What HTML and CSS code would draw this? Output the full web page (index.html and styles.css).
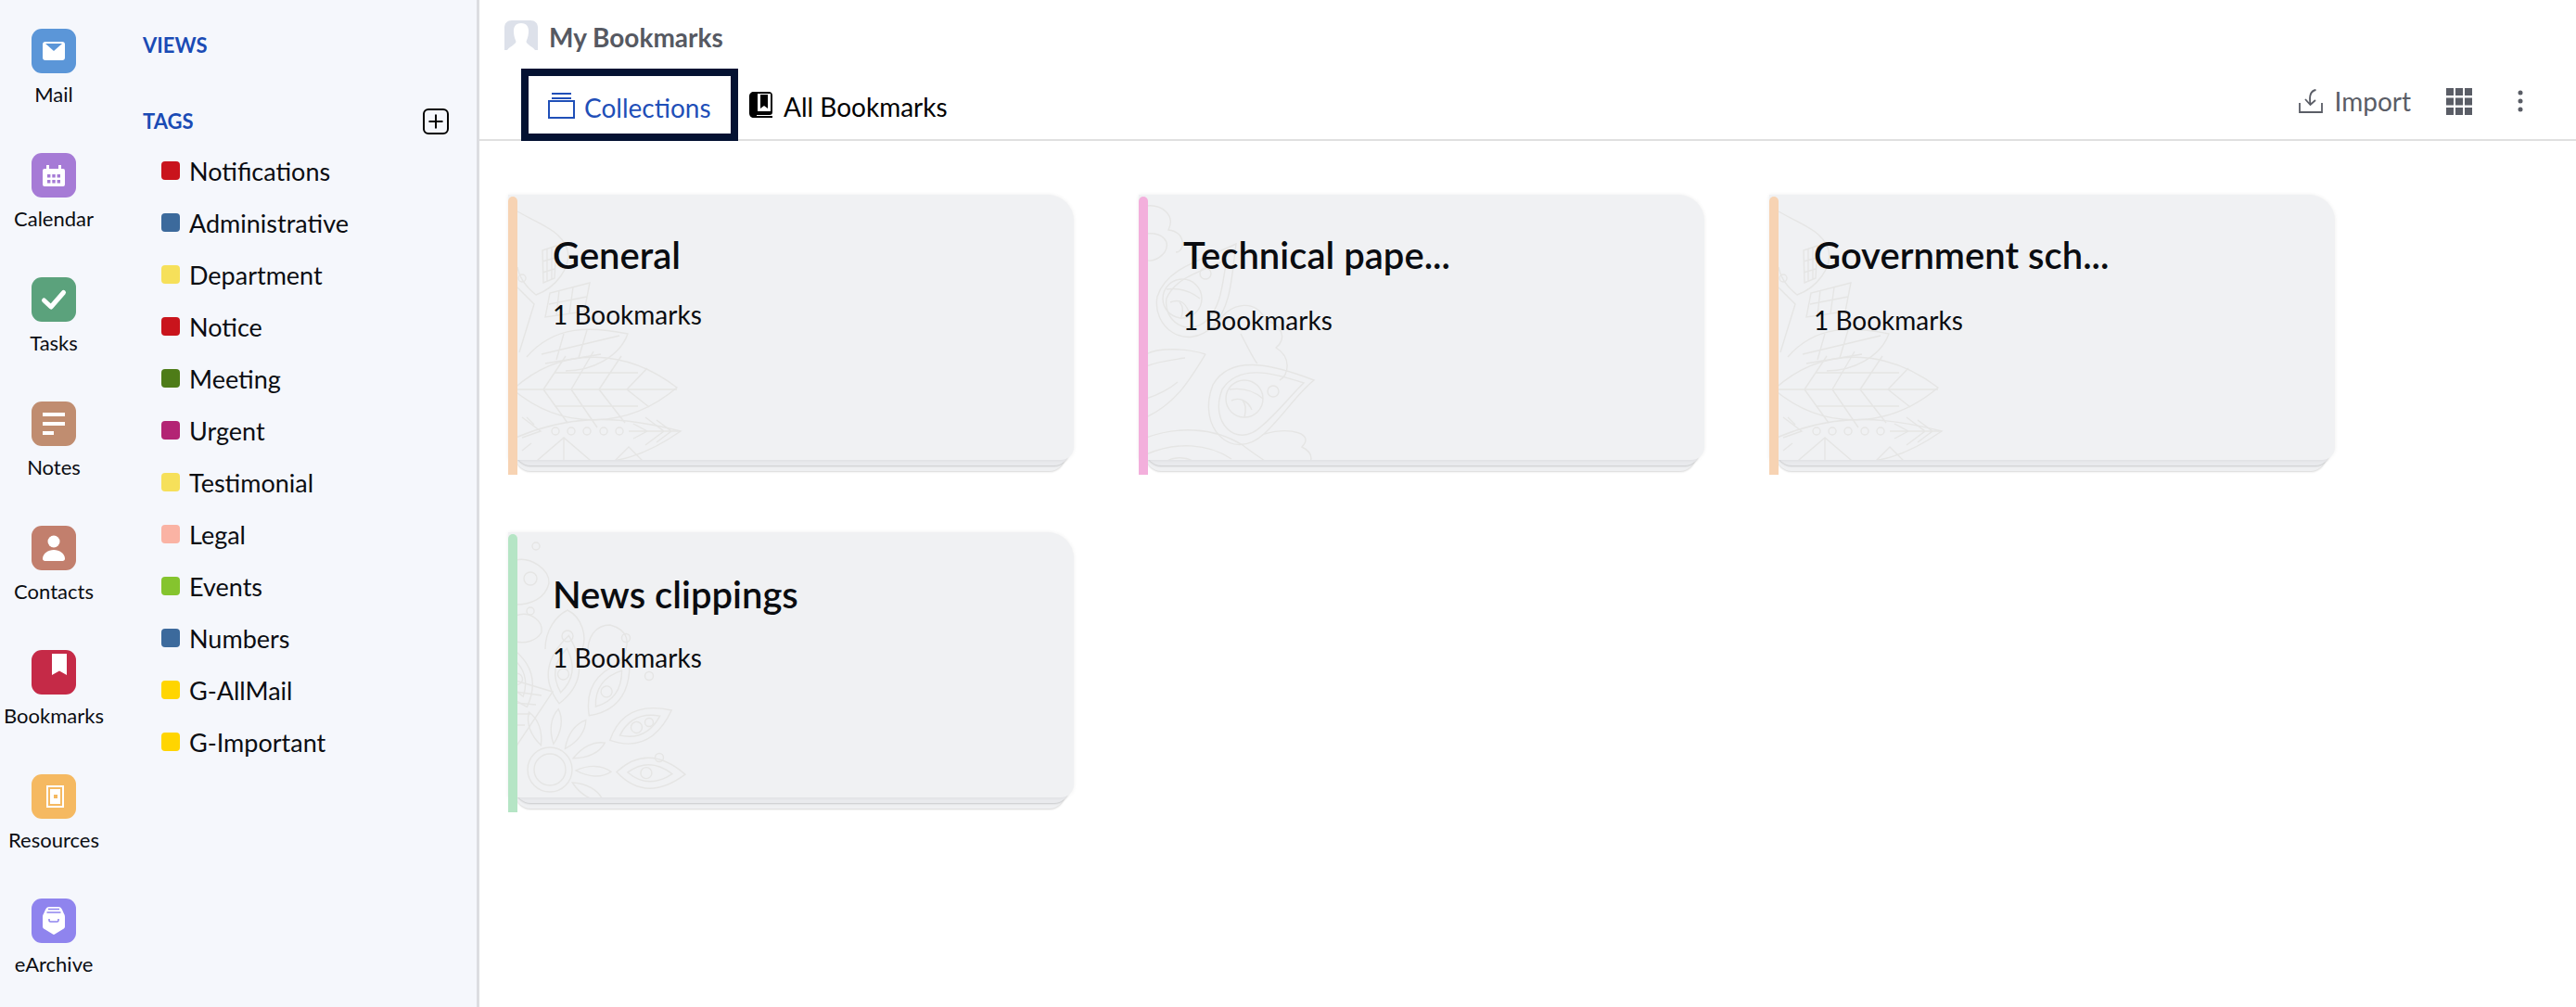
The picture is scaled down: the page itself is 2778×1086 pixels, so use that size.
FILE: index.html
```html
<!DOCTYPE html>
<html lang="en">
<head>
<meta charset="utf-8">
<title>My Bookmarks</title>
<link rel="stylesheet" href="styles.css">
</head>
<body>
<svg class="defs" width="0" height="0" aria-hidden="true">
  <defs>
    <symbol id="leaf" viewBox="0 0 200 286">
      <g fill="none">
        <path d="M5 210C60 160 130 168 182 208C130 252 60 256 5 210Z"/>
        <path d="M5 210H182M38 210L62 174M68 210L92 169M98 210L122 174M128 210L150 187M38 210L64 246M68 210L96 251M98 210L126 246M128 210L152 229M50 192H140M50 228H140"/>
        <path d="M8 262C60 240 110 235 186 255C150 280 120 292 60 290"/>
        <path d="M130 255H186M135 247L150 255L135 263M148 240L168 255L148 270M160 243L176 255L160 267"/>
        <circle cx="51" cy="255" r="4"/><circle cx="68" cy="255" r="4"/><circle cx="85" cy="255" r="4"/><circle cx="103" cy="255" r="4"/><circle cx="120" cy="255" r="4"/>
        <path d="M15 262L35 255L15 240M28 248L20 240M25 268L15 276"/>
        <path d="M25 292L60 262L95 292M60 262V292M110 292L130 272L150 292"/>
        <path d="M10 18C30 30 58 38 64 60C68 78 52 100 30 108C20 100 12 90 10 78"/>
        <path d="M37 60L52 55L50 90L38 95ZM42 58V93M47 57V91M37 72L51 68M37 84L50 80"/>
        <path d="M10 100L28 118L12 170M40 132L45 106L88 95L82 126ZM55 103L52 130M70 100L66 128M44 118L85 110"/>
        <circle cx="15" cy="90" r="4"/><circle cx="5" cy="108" r="4"/>
        <path d="M20 175C50 140 90 142 129 150C120 175 90 190 62 190M36 172L120 152M40 182L100 172M60 150L52 178M85 146L76 176"/>
      </g>
    </symbol>
    <symbol id="peacock" viewBox="0 0 200 286">
      <g fill="none">
        <path d="M189 200C150 185 100 170 80 205C62 250 100 290 135 258C155 240 170 215 189 200Z"/>
        <path d="M178 203C145 192 108 182 90 210C76 245 105 275 132 250C150 235 165 215 178 203Z"/>
        <circle cx="114" cy="220" r="20"/>
        <path d="M98 210C112 208 125 212 134 220M100 222C108 218 118 222 122 232M112 222C116 226 116 232 114 240"/>
        <circle cx="145" cy="212" r="6"/>
        <path d="M105 53C70 70 30 78 20 110C14 142 50 170 80 142C100 120 100 90 105 53Z"/>
        <path d="M95 70C70 82 40 88 30 112C26 135 52 155 74 135C90 118 90 95 95 70Z"/>
        <circle cx="47" cy="112" r="21"/>
        <path d="M30 102C44 100 56 104 66 112M34 116C44 112 50 116 54 126M44 116C48 120 48 126 46 132"/>
        <circle cx="72" cy="85" r="6"/>
        <path d="M72 172C50 165 20 165 8 172M72 172C55 200 40 225 8 240M50 176C35 178 20 180 8 185M42 202C30 212 20 216 8 220"/>
        <path d="M8 12C25 10 40 22 32 38C52 40 50 62 40 62M8 42C25 40 35 50 28 62C20 72 10 72 8 70"/>
        <path d="M80 145C100 110 130 115 136 135C155 140 160 155 148 165C165 175 162 195 152 200"/>
        <path d="M110 150C118 165 125 180 128 182"/>
        <path d="M8 262C40 250 80 250 112 270C125 280 135 286 140 290M8 280C40 266 75 268 100 285M25 292C35 280 55 282 65 292"/>
        <path d="M135 258C165 250 190 258 176 272C192 280 185 292 180 292"/>
      </g>
    </symbol>
    <g id="petal" fill="none">
      <path d="M0 -72C-20 -92 -24 -116 0 -146C24 -116 20 -92 0 -72Z"/>
      <path d="M0 -84C-11 -98 -13 -114 0 -132C13 -114 11 -98 0 -84Z"/>
      <circle cx="0" cy="-104" r="6"/>
      <path d="M0 -28C-7 -42 -7 -56 0 -66C7 -56 7 -42 0 -28Z"/>
    </g>
    <symbol id="flower" viewBox="0 0 200 286">
      <g fill="none">
        <circle cx="45" cy="256" r="17"/><circle cx="45" cy="256" r="24"/>
        <g transform="translate(45 256)">
          <use href="#petal" transform="rotate(8)"/>
          <use href="#petal" transform="rotate(36)"/>
          <use href="#petal" transform="rotate(64)"/>
          <use href="#petal" transform="rotate(92)"/>
          <use href="#petal" transform="rotate(120)"/>
          <use href="#petal" transform="rotate(-20)"/>
        </g>
        <path d="M8 160L48 172L8 232ZM8 172L36 176M8 184L30 186M8 196L24 196M8 208L18 208"/>
        <circle cx="30" cy="15" r="4"/><circle cx="127" cy="114" r="4.5"/><circle cx="152" cy="155" r="4.5"/><circle cx="152" cy="205" r="4.5"/><circle cx="163" cy="243" r="4.5"/>
        <path d="M8 30C24 26 45 40 44 55C40 72 24 78 8 78"/><circle cx="24" cy="50" r="7"/>
        <path d="M8 90C24 84 38 96 36 108C30 118 18 120 8 118"/><circle cx="24" cy="85" r="4"/>
        <circle cx="64" cy="112" r="6"/><path d="M40 126C40 105 52 90 64 84C80 92 85 112 80 126"/>
        <path d="M86 135C84 112 95 100 110 100C128 105 135 118 120 140"/>
      </g>
    </symbol>
  </defs>
</svg>

<div class="app">
  <aside class="side">
    <nav class="rail">
      <a class="app-item">
        <svg class="app-icon" viewBox="0 0 48 48"><rect class="ic-mail" width="48" height="48" rx="11"/><rect x="12" y="14" width="24" height="20" rx="3" fill="#fff"/><path d="M15 16H33L24 24Z" fill="#5b96d8"/></svg>
        <span class="app-label">Mail</span>
      </a>
      <a class="app-item">
        <svg class="app-icon" viewBox="0 0 48 48"><rect class="ic-cal" width="48" height="48" rx="11"/><path d="M16 13h3v4h10v-4h3v4h2a2 2 0 0 1 2 2v15a2 2 0 0 1-2 2H14a2 2 0 0 1-2-2V19a2 2 0 0 1 2-2h2Z" fill="#fff"/><path d="M17 23h3.4v3.4H17zM22.3 23h3.4v3.4h-3.4zM27.6 23H31v3.4h-3.4zM17 29h3.4v3.4H17zM22.3 29h3.4v3.4h-3.4zM27.6 29H31v3.4h-3.4z" fill="#a67bd6"/></svg>
        <span class="app-label">Calendar</span>
      </a>
      <a class="app-item">
        <svg class="app-icon" viewBox="0 0 48 48"><rect class="ic-task" width="48" height="48" rx="11"/><path d="M13.5 25L21 32L34.5 16.5" fill="none" stroke="#fff" stroke-width="5" stroke-linecap="round" stroke-linejoin="round"/></svg>
        <span class="app-label">Tasks</span>
      </a>
      <a class="app-item">
        <svg class="app-icon" viewBox="0 0 48 48"><rect class="ic-note" width="48" height="48" rx="11"/><path d="M12 12h24v4H12zM12 22h24v4H12zM12 32h12v4H12z" fill="#fff"/></svg>
        <span class="app-label">Notes</span>
      </a>
      <a class="app-item">
        <svg class="app-icon" viewBox="0 0 48 48"><rect class="ic-cont" width="48" height="48" rx="11"/><circle cx="24" cy="17" r="6.5" fill="#fff"/><path d="M12 35.500C12 30 18 26 24 26S36 30 36 35.500C36 37 35 38 33.500 38H14.500C13 38 12 37 12 35.500Z" fill="#fff"/></svg>
        <span class="app-label">Contacts</span>
      </a>
      <a class="app-item">
        <svg class="app-icon" viewBox="0 0 48 48"><rect class="ic-book" width="48" height="48" rx="11"/><path d="M22 4H38V27L30 22.500L22 27Z" fill="#fff"/></svg>
        <span class="app-label">Bookmarks</span>
      </a>
      <a class="app-item">
        <svg class="app-icon" viewBox="0 0 48 48"><rect class="ic-res" width="48" height="48" rx="11"/><rect x="17" y="13" width="17" height="22" fill="none" stroke="#fff" stroke-width="2"/><rect x="20" y="16" width="11" height="16" fill="#fff"/><rect x="24" y="22" width="4" height="4" fill="#f5b961"/></svg>
        <span class="app-label">Resources</span>
      </a>
      <a class="app-item">
        <svg class="app-icon" viewBox="0 0 48 48"><rect class="ic-arc" width="48" height="48" rx="11"/><path d="M19 9H29C31 9 32 10 33 12L35 16.500C35.700 17.500 36 18.500 36 20V30C36 31.500 35.400 32.300 34 33L25 38.500C24.300 39 23.700 39 23 38.500L14 33C12.600 32.300 12 31.500 12 30V20C12 18.500 12.300 17.500 13 16.500L15 12C16 10 17 9 19 9Z" fill="#fff"/><path d="M18 11.500H30M16.500 15H31.500" stroke="#8f84ee" stroke-width="1.600" fill="none"/><path d="M19 22V23.500C19 24.500 19.500 25 20.500 25H27.500C28.500 25 29 24.500 29 23.500V22" stroke="#8f84ee" stroke-width="1.600" fill="none"/></svg>
        <span class="app-label">eArchive</span>
      </a>
    </nav>
    <div class="tree">
      <h2 class="tree-head tree-views">VIEWS</h2>
      <div class="tree-tags">
        <h2 class="tree-head">TAGS</h2>
        <svg class="add-tag" viewBox="0 0 28 28"><rect x="1" y="1" width="26" height="26" rx="5" fill="none" stroke="#000" stroke-width="2"/><path d="M14 6.500V21.500M6.500 14H21.500" stroke="#000" stroke-width="2"/></svg>
      </div>
      <ul class="tag-list">
        <li class="tag"><i class="swatch c-red"></i>Notifications</li>
        <li class="tag"><i class="swatch c-blue"></i>Administrative</li>
        <li class="tag"><i class="swatch c-yellow"></i>Department</li>
        <li class="tag"><i class="swatch c-red"></i>Notice</li>
        <li class="tag"><i class="swatch c-green"></i>Meeting</li>
        <li class="tag"><i class="swatch c-magenta"></i>Urgent</li>
        <li class="tag"><i class="swatch c-yellow"></i>Testimonial</li>
        <li class="tag"><i class="swatch c-salmon"></i>Legal</li>
        <li class="tag"><i class="swatch c-lime"></i>Events</li>
        <li class="tag"><i class="swatch c-blue"></i>Numbers</li>
        <li class="tag"><i class="swatch c-gold"></i>G-AllMail</li>
        <li class="tag"><i class="swatch c-gold"></i>G-Important</li>
      </ul>
    </div>
  </aside>

  <main class="main">
    <header class="title-row">
      <svg class="avatar" viewBox="0 0 36 32"><path d="M0 32V8C0 3 3 0 8 0H28C33 0 36 3 36 8V32Z" fill="#dde1ea"/><path d="M18 3C12 3 9.500 7 10 13C10.300 18 12 21 12.500 23C12 26 6 28 3 32H33C30 28 24 26 23.500 23C24 21 25.700 18 26 13C26.500 7 24 3 18 3Z" fill="#fff"/></svg>
      <h1 class="title">My Bookmarks</h1>
    </header>
    <div class="tabbar">
      <div class="tab tab-active">
        <svg class="tab-icon-stack" viewBox="0 0 29 28"><path d="M4 1H25M4 6H25" stroke="#1f4fb8" stroke-width="2"/><rect x="1" y="9" width="27" height="18" fill="none" stroke="#1f4fb8" stroke-width="2"/></svg>
        <span class="tab-text">Collections</span>
      </div>
      <div class="tab tab-all">
        <svg class="tab-icon-book" viewBox="0 0 25 28"><path d="M5 0H21C23.500 0 25 1.500 25 4V22C25 24 24 25 22 25H8V26H25V28H5C2 28 0 26 0 23V5C0 2 2 0 5 0Z" fill="#000"/><path d="M9 2H23V21H9Z" fill="#fff"/><path d="M12 3H20V18L16 15L12 18Z" fill="#000"/></svg>
        <span class="tab-text">All Bookmarks</span>
      </div>
      <div class="actions">
        <button class="import">
          <svg class="import-icon" viewBox="0 0 26 26"><path d="M1 15V25H25V15" fill="none" stroke="#5a5d66" stroke-width="1.800"/><path d="M18.500 1C13 2 11 7 12.500 16M7 11L12.500 17L18 12" fill="none" stroke="#5a5d66" stroke-width="1.800"/></svg>
          <span>Import</span>
        </button>
        <svg class="grid-icon" viewBox="0 0 28 29"><path d="M0 0h8v8H0zM10 0h8v8h-8zM20 0h8v8h-8zM0 10.500h8v8H0zM10 10.500h8v8h-8zM20 10.500h8v8h-8zM0 21h8v8H0zM10 21h8v8h-8zM20 21h8v8h-8z" fill="#5a5d66"/></svg>
        <svg class="more-icon" viewBox="0 0 6 24"><circle cx="3" cy="3" r="2.500" fill="#5a5d66"/><circle cx="3" cy="12" r="2.500" fill="#5a5d66"/><circle cx="3" cy="21" r="2.500" fill="#5a5d66"/></svg>
      </div>
    </div>
    <section class="cards">
      <article class="card stripe-peach">
        <div class="sheet sheet-back"></div>
        <div class="sheet sheet-mid"></div>
        <div class="face">
          <svg class="mandala"><use href="#leaf"/></svg>
          <h3 class="card-title">General</h3>
          <p class="card-sub sub-near">1 Bookmarks</p>
        </div>
        <div class="stripe"></div>
      </article>
      <article class="card stripe-pink">
        <div class="sheet sheet-back"></div>
        <div class="sheet sheet-mid"></div>
        <div class="face">
          <svg class="mandala"><use href="#peacock"/></svg>
          <h3 class="card-title">Technical pape...</h3>
          <p class="card-sub">1 Bookmarks</p>
        </div>
        <div class="stripe"></div>
      </article>
      <article class="card stripe-peach">
        <div class="sheet sheet-back"></div>
        <div class="sheet sheet-mid"></div>
        <div class="face">
          <svg class="mandala"><use href="#leaf"/></svg>
          <h3 class="card-title">Government sch...</h3>
          <p class="card-sub">1 Bookmarks</p>
        </div>
        <div class="stripe"></div>
      </article>
      <article class="card stripe-green">
        <div class="sheet sheet-back"></div>
        <div class="sheet sheet-mid"></div>
        <div class="face">
          <svg class="mandala"><use href="#flower"/></svg>
          <h3 class="card-title title-low">News clippings</h3>
          <p class="card-sub">1 Bookmarks</p>
        </div>
        <div class="stripe"></div>
      </article>
    </section>
  </main>
</div>
</body>
</html>
```
FILE: styles.css
```css
* { box-sizing: border-box; }
html, body { margin: 0; height: 100%; background: #fff; }
body { font-family: Lato, "Liberation Sans", sans-serif; color: #000; overflow: hidden; }
h1, h2, h3, p, ul { margin: 0; padding: 0; }
.defs { position: absolute; }

.app { display: flex; height: 1086px; }
.side { width: 517px; flex: none; display: flex; background: #f5f7fc; border-right: 3px solid #dcdde1; }

.rail { width: 116px; flex: none; padding-top: 31px; display: flex; flex-direction: column; }
.app-item { height: 134px; flex: none; display: flex; flex-direction: column; align-items: center; }
.app-icon { width: 48px; height: 48px; display: block; flex: none; }
.app-label { margin-top: 10px; font-size: 22px; line-height: 26px; white-space: nowrap; color: #0b0d12; }
.ic-mail { fill: #5b96d8; }
.ic-cal { fill: #a67bd6; }
.ic-task { fill: #5ba27c; }
.ic-note { fill: #c08d70; }
.ic-cont { fill: #c27f6d; }
.ic-book { fill: #c52a47; }
.ic-res { fill: #f5b961; }
.ic-arc { fill: #8f84ee; }

.tree { flex: 1; padding: 36px 30px 0 38px; }
.tree-head { font-size: 22px; line-height: 26px; font-weight: 700; color: #1a4bb5; }
.tree-views { margin-bottom: 55px; }
.tree-tags { display: flex; align-items: center; justify-content: space-between; height: 28px; }
.add-tag { width: 28px; height: 28px; }
.tag-list { list-style: none; padding: 11px 0 0 20px; }
.tag { height: 56px; display: flex; align-items: center; gap: 10px; font-size: 27px; color: #0b0d12; }
.swatch { width: 20px; height: 20px; border-radius: 4px; flex: none; }
.c-red { background: #c9141c; }
.c-blue { background: #3c6a9c; }
.c-yellow { background: #f6e05a; }
.c-green { background: #4e7c18; }
.c-magenta { background: #b32474; }
.c-salmon { background: #fab3a4; }
.c-lime { background: #85c42e; }
.c-gold { background: #ffd500; }

.main { flex: 1; min-width: 0; display: flex; flex-direction: column; }
.title-row { height: 74px; flex: none; padding: 22px 0 0 27px; display: flex; align-items: flex-start; gap: 12px; }
.avatar { width: 36px; height: 32px; flex: none; }
.title { font-size: 28px; line-height: 36px; font-weight: 700; color: #565962; }

.tabbar { height: 78px; flex: none; padding-left: 45px; display: flex; align-items: stretch; gap: 12px; border-bottom: 2px solid #e0e0e0; }
.tab { display: flex; align-items: center; padding-top: 2px; font-size: 28px; }
.tab-text { margin-top: 4px; }
.tab-active { width: 234px; height: 78px; border: 8px solid #041232; padding-left: 21px; gap: 10px; color: #1f4fb8; }
.tab-all { gap: 12px; height: 76px; }
.tab-icon-stack { width: 29px; height: 28px; flex: none; }
.tab-icon-book { width: 25px; height: 28px; flex: none; }

.actions { margin-left: auto; height: 76px; display: flex; align-items: center; padding-right: 57px; padding-bottom: 6px; }
.import { display: flex; align-items: center; gap: 13px; border: 0; padding: 0; background: none; font: inherit; font-size: 28px; color: #5a5d66; }
.import-icon { width: 26px; height: 26px; }
.grid-icon { width: 28px; height: 29px; margin-left: 38px; }
.more-icon { width: 6px; height: 24px; margin-left: 49px; }

.cards { padding: 58px 0 0 31px; display: grid; grid-template-columns: repeat(3, 610px); column-gap: 70px; row-gap: 78px; }
.card { position: relative; height: 286px; isolation: isolate; --stripe: #f7d3b3; }
.stripe-pink { --stripe: #f3afdc; }
.stripe-green { --stripe: #b5e5c5; }
.sheet { position: absolute; left: 8px; height: 60px; border-radius: 0 0 16px 16px; box-shadow: 0 1px 2px rgba(0, 0, 0, .16); }
.sheet-mid { z-index: 1; right: 5px; bottom: -6px; background: #e9eaed; }
.sheet-back { z-index: 0; right: 10px; bottom: -12px; background: #eff0f2; }
.face { position: relative; z-index: 2; height: 286px; padding: 40px 0 0 48px; background: #f0f1f3; border-radius: 0 28px 14px 0; box-shadow: 0 0 4px rgba(0, 0, 0, .07); overflow: hidden; }
.stripe { position: absolute; z-index: 3; left: 0; top: 2px; bottom: -16px; width: 10px; background: var(--stripe); border-radius: 5px 5px 0 0; }
.card-title { position: relative; font-size: 40px; line-height: 50px; font-weight: 600; white-space: nowrap; color: #0a0c10; }
.title-low { margin-top: 2px; }
.card-sub { position: relative; margin-top: 28px; font-size: 28px; line-height: 34px; color: #0a0c10; }
.title-low + .card-sub { margin-top: 26px; }
.sub-near { margin-top: 22px; }
.mandala { position: absolute; left: 0; top: 0; width: 200px; height: 286px; stroke: #e5e5e4; stroke-width: 1.4; }
```
